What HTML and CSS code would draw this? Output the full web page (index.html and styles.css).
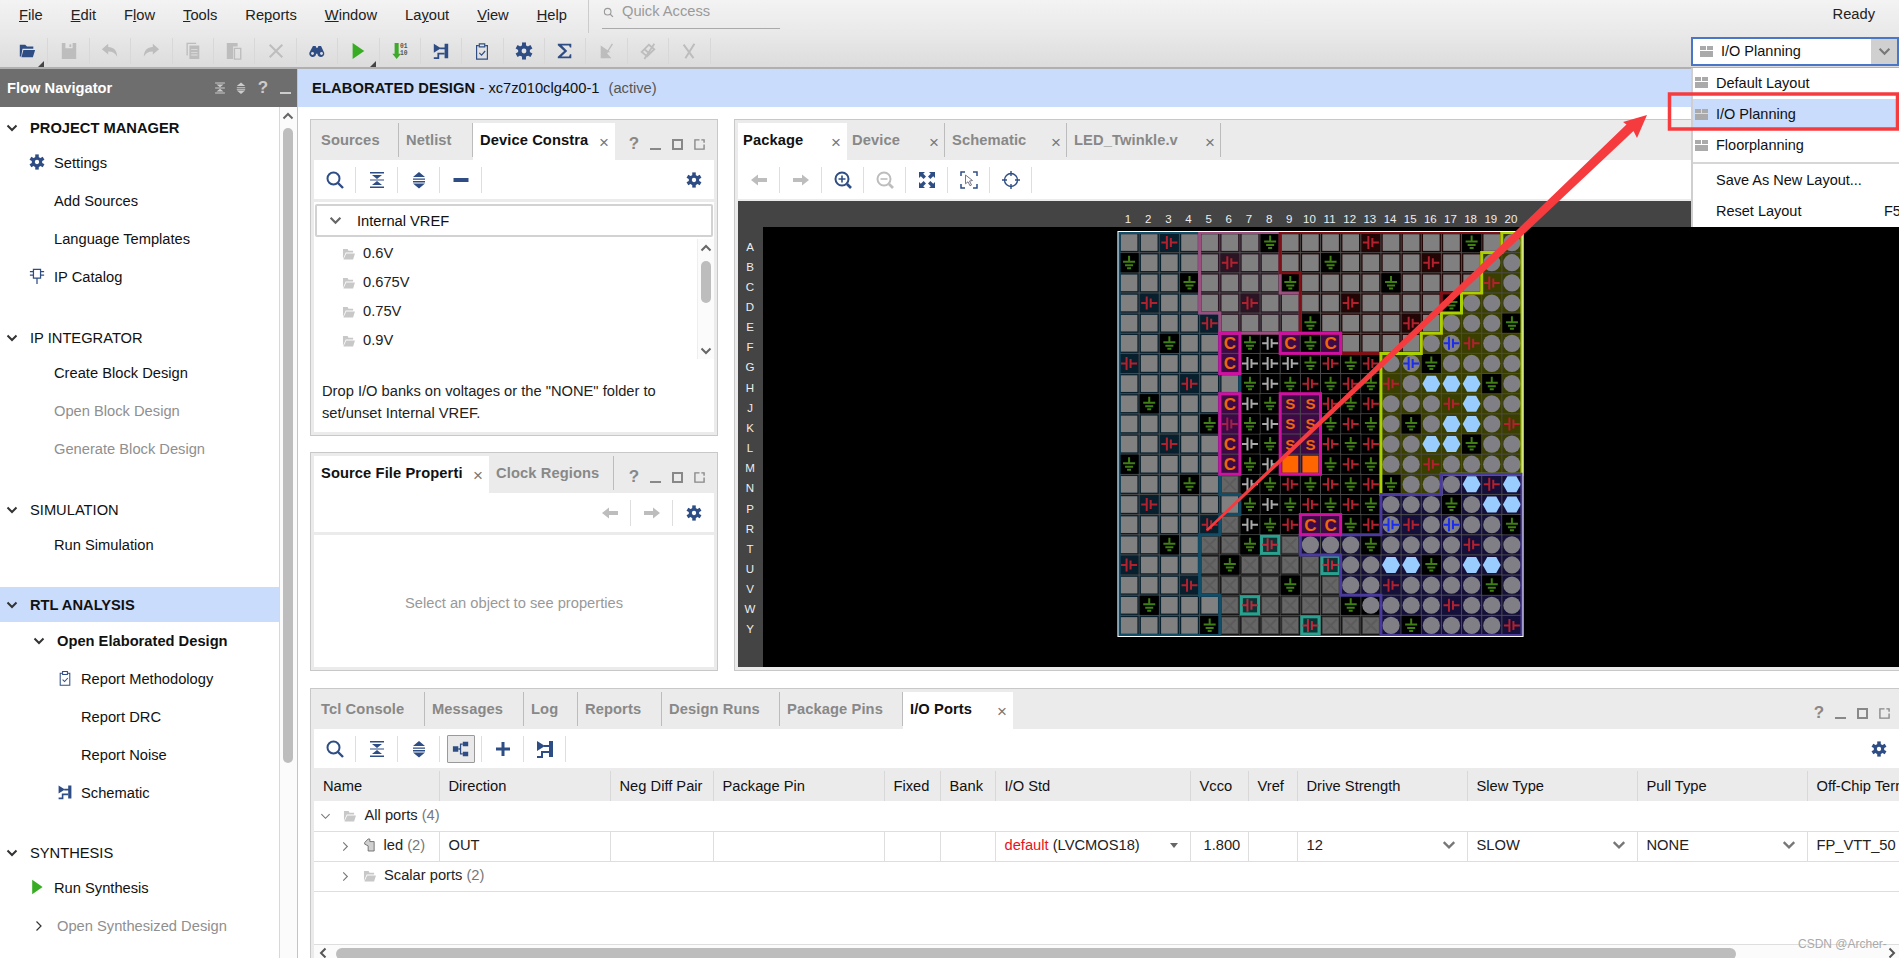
FILE: index.html
```html
<!DOCTYPE html>
<html lang="en">
<head>
<meta charset="utf-8">
<title>Vivado I/O Planning</title>
<link rel="stylesheet" href="styles.css">
</head>
<body>
<svg class="sprite" aria-hidden="true">
  <symbol id="gear" viewBox="-10 -10 20 20">
    <g fill="currentColor"><circle r="6.6"/><rect x="-2.2" y="-9.5" width="4.4" height="19"/><rect x="-2.2" y="-9.5" width="4.4" height="19" transform="rotate(60)"/><rect x="-2.2" y="-9.5" width="4.4" height="19" transform="rotate(120)"/></g>
    <circle r="2.7" fill="#fff"/>
  </symbol>
  <symbol id="gearg" viewBox="-10 -10 20 20">
    <g fill="currentColor"><circle r="6.6"/><rect x="-2.2" y="-9.5" width="4.4" height="19"/><rect x="-2.2" y="-9.5" width="4.4" height="19" transform="rotate(60)"/><rect x="-2.2" y="-9.5" width="4.4" height="19" transform="rotate(120)"/></g>
    <circle r="2.7" fill="#e3e3e3"/>
  </symbol>
  <symbol id="search" viewBox="0 0 20 20"><circle cx="8.5" cy="8.5" r="6" fill="none" stroke="currentColor" stroke-width="2"/><path d="M13 13l5 5" stroke="currentColor" stroke-width="2.4"/></symbol>
  <symbol id="collapse" viewBox="0 0 20 20"><path fill="currentColor" d="M3 2h14v1.6H3zM5 5h10l-5 4zM3 9.4h14v1.2H3zM10 11l5 4H5zM3 16.4h14V18H3z"/></symbol>
  <symbol id="expand" viewBox="0 0 20 20"><path fill="currentColor" d="M10 2l6 5H4zM4 8.4h12v1.4H4zM4 11h12v1.4H4zM4 13.5h12L10 18.500z"/></symbol>
  <symbol id="minus" viewBox="0 0 20 20"><rect x="2.500" y="8" width="15" height="4" fill="currentColor"/></symbol>
  <symbol id="plus" viewBox="0 0 20 20"><path fill="currentColor" d="M8.500 3h3v5.500H17v3h-5.500V17h-3v-5.500H3v-3h5.500z"/></symbol>
  <symbol id="left" viewBox="0 0 20 20"><path fill="currentColor" d="M2 10l7-5.500V8h9v4H9v3.500z"/></symbol>
  <symbol id="right" viewBox="0 0 20 20"><path fill="currentColor" d="M18 10l-7-5.500V8H2v4h9v3.500z"/></symbol>
  <symbol id="zoomin" viewBox="0 0 20 20"><circle cx="9" cy="9" r="6.500" fill="none" stroke="currentColor" stroke-width="2"/><path d="M14 14l4 4" stroke="currentColor" stroke-width="2.600"/><path d="M9 5.500v7M5.500 9h7" stroke="currentColor" stroke-width="1.600"/></symbol>
  <symbol id="zoomout" viewBox="0 0 20 20"><circle cx="9" cy="9" r="6.500" fill="none" stroke="currentColor" stroke-width="2"/><path d="M14 14l4 4" stroke="currentColor" stroke-width="2.600"/><path d="M5.500 9h7" stroke="currentColor" stroke-width="1.600"/></symbol>
  <symbol id="fit" viewBox="0 0 20 20"><path fill="currentColor" d="M2 2h6L6.200 3.800 9 6.600 6.600 9 3.800 6.200 2 8zM18 2v6l-1.800-1.800L13.400 9 11 6.600l2.800-2.800L12 2zM2 18v-6l1.800 1.800L6.600 11 9 13.400l-2.800 2.800L8 18zM18 18h-6l1.800-1.800L11 13.400l2.400-2.400 2.800 2.800L18 12z"/></symbol>
  <symbol id="zoomarea" viewBox="0 0 20 20"><path fill="none" stroke="currentColor" stroke-width="1.500" d="M2 6V2h4M14 2h4v4M18 14v4h-4M6 18H2v-4"/><path fill="#fff" stroke="#778" d="M6.500 5l7 5.500-3 .5 2 4-1.500.8-2-4-2.500 2z"/></symbol>
  <symbol id="target" viewBox="0 0 20 20"><circle cx="10" cy="10" r="6.500" fill="none" stroke="currentColor" stroke-width="1.400"/><path stroke="currentColor" stroke-width="1.400" d="M10 1v5M10 14v5M1 10h5M14 10h5"/></symbol>
  <symbol id="folderopen" viewBox="0 0 20 20"><path fill="currentColor" d="M2 3h6l2 2h7v2.500H5L3.500 16H2z"/><path fill="currentColor" d="M6 9h13l-2.500 8H3.800z"/></symbol>
  <symbol id="save" viewBox="0 0 20 20"><path fill="currentColor" fill-rule="evenodd" d="M2 1h16v18H2zM6 1v6h8V1zM10.500 2.500h2v3h-2z"/></symbol>
  <symbol id="undo" viewBox="0 0 20 20"><path fill="currentColor" d="M1 8l7-6v3.500c6 0 10 4 10 11-2-4-5-6-10-6V14z"/></symbol>
  <symbol id="redo" viewBox="0 0 20 20"><path fill="currentColor" d="M19 8l-7-6v3.500c-6 0-10 4-10 11 2-4 5-6 10-6V14z"/></symbol>
  <symbol id="copy" viewBox="0 0 20 20"><path fill="none" stroke="currentColor" stroke-width="1.500" d="M3.500 15V1.500h10"/><path fill="currentColor" fill-rule="evenodd" d="M6 4h11v15H6zM8 8v1h7V8zM8 11v1h7v-1zM8 14v1h7v-1z"/></symbol>
  <symbol id="paste" viewBox="0 0 20 20"><path fill="currentColor" d="M2 1h12v4H9v14H2z"/><path fill="none" stroke="currentColor" stroke-width="1.500" d="M10.500 7h7v12h-7z"/></symbol>
  <symbol id="cross" viewBox="0 0 20 20"><path fill="none" stroke="currentColor" stroke-width="2.200" d="M3 3l14 14M17 3L3 17"/></symbol>
  <symbol id="binoc" viewBox="0 0 20 20"><path fill="currentColor" d="M5.500 4.500h3l.7 2h1.600l.7-2h3l3.500 7.500a3.800 3.800 0 1 1-7.500 1h-1.500a3.800 3.800 0 1 1-7.500-1z"/><circle cx="5" cy="12.800" r="1.600" fill="#ddd"/><circle cx="15" cy="12.800" r="1.600" fill="#ddd"/></symbol>
  <symbol id="run" viewBox="0 0 20 20"><path fill="currentColor" d="M4 1l13 9-13 9z"/></symbol>
  <symbol id="schem" viewBox="0 0 20 20"><path fill="currentColor" d="M2 2l8 5-8 5zM14 2h4v16h-4z"/><path fill="none" stroke="currentColor" stroke-width="2" d="M9 7h6M14 13H7v5H2"/></symbol>
  <symbol id="clip" viewBox="0 0 20 20"><path fill="none" stroke="currentColor" stroke-width="1.300" d="M6.500 4H4v15h12V4h-2.500"/><path fill="none" stroke="currentColor" stroke-width="1.300" d="M7 2h6v3.500H7z"/><path fill="none" stroke="currentColor" stroke-width="1.300" d="M7 12l2.500 2.500L13.500 10"/></symbol>
  <symbol id="sigma" viewBox="0 0 20 20"><path fill="currentColor" d="M2 2h15v4h-1.500L14.500 4H6.500l6 6-6.500 6h8.500l1-2.500H17V18H2v-1.500L9 10 2 3.500z"/></symbol>
  <symbol id="dis1" viewBox="0 0 20 20"><path fill="currentColor" d="M3 4l11 7.500H9l6 6.500H3z"/><path stroke="currentColor" stroke-width="1.500" d="M16 2L6 18"/></symbol>
  <symbol id="dis2" viewBox="0 0 20 20"><path fill="none" stroke="currentColor" stroke-width="2" d="M3 11l8-8 6 5-8 8zM6 19L17 2M6 8l6 5"/></symbol>
  <symbol id="dis3" viewBox="0 0 20 20"><path fill="none" stroke="currentColor" stroke-width="2.200" d="M4 3l11 15M16 2L6 18"/></symbol>
  <symbol id="folder" viewBox="0 0 14 13"><path fill="currentColor" d="M1 1h5l1 2h5v2H4L1 12zM4.500 6H14l-2 6.500H1.500z"/></symbol>
  <symbol id="chip" viewBox="0 0 16 18"><path fill="none" stroke="currentColor" stroke-width="1.400" d="M4 1.500h8v10H4zM8 11.500V18M0 4h4M0 8h4M12 4h4M12 8h4"/></symbol>
  <symbol id="bus" viewBox="0 0 14 16"><path fill="#d0d0d0" stroke="#666" d="M2 5l4-4h2v3h5v11H6V9L2 7z"/></symbol>
  <symbol id="layout" viewBox="0 0 13 11"><path fill="currentColor" d="M0 0h6v4H0zM7 0h6v4H7zM0 5h13v6H0z"/></symbol>
  <symbol id="float" viewBox="0 0 12 12"><path fill="none" stroke="currentColor" stroke-width="1.500" d="M6 1H1v10h10V6M8 1h3v3"/></symbol>
  <symbol id="chev" viewBox="0 0 12 12"><path fill="none" stroke="currentColor" stroke-width="2" d="M1.500 3.500L6 8l4.500-4.500"/></symbol>
  <symbol id="chevthin" viewBox="0 0 12 12"><path fill="none" stroke="currentColor" stroke-width="1.200" d="M1.500 3.500L6 8l4.500-4.500"/></symbol>
  <symbol id="hier" viewBox="0 0 20 20"><path fill="currentColor" d="M1 7h6v6H1zM12 2h6v5h-6zM12 13h6v5h-6z"/><path fill="none" stroke="currentColor" stroke-width="1.400" d="M7 10h2.500V4.500H12M9.500 10v5.500H12"/></symbol>
</svg>

<header class="menubar">
  <nav class="menus">
    <span><u>F</u>ile</span><span><u>E</u>dit</span><span>F<u>l</u>ow</span><span><u>T</u>ools</span><span>Re<u>p</u>orts</span><span><u>W</u>indow</span><span>La<u>y</u>out</span><span><u>V</u>iew</span><span><u>H</u>elp</span>
  </nav>
  <div class="quick">
    <div class="quick-field"><svg class="ico-q"><use href="#search"/></svg><span>Quick Access</span></div>
  </div>
  <div class="ready">Ready</div>
</header>

<div class="toolbar-main">
  <button class="tb navy corner"><svg><use href="#folderopen"/></svg></button>
  <button class="tb off"><svg><use href="#save"/></svg></button>
  <button class="tb off"><svg><use href="#undo"/></svg></button>
  <button class="tb off"><svg><use href="#redo"/></svg></button>
  <button class="tb off"><svg><use href="#copy"/></svg></button>
  <button class="tb off"><svg><use href="#paste"/></svg></button>
  <button class="tb off"><svg><use href="#cross"/></svg></button>
  <button class="tb navy"><svg><use href="#binoc"/></svg></button>
  <button class="tb green corner"><svg><use href="#run"/></svg></button>
  <button class="tb navy">
    <svg viewBox="0 0 20 20"><path fill="#3daa2a" d="M4 1h4.500v12H11l-4.700 6L1.500 13H4z"/><text x="10" y="7" class="bits">01</text><text x="10" y="14" class="bits">10</text></svg>
  </button>
  <button class="tb navy"><svg><use href="#schem"/></svg></button>
  <button class="tb navy"><svg><use href="#clip"/></svg></button>
  <button class="tb navy"><svg><use href="#gearg"/></svg></button>
  <button class="tb navy"><svg><use href="#sigma"/></svg></button>
  <button class="tb off"><svg><use href="#dis1"/></svg></button>
  <button class="tb off"><svg><use href="#dis2"/></svg></button>
  <button class="tb off"><svg><use href="#dis3"/></svg></button>
  <div class="combo">
    <svg class="ico-layout"><use href="#layout"/></svg>
    <span class="combo-text">I/O Planning</span>
    <span class="combo-btn"><svg><use href="#chev"/></svg></span>
  </div>
</div>

<div class="app">
  <aside class="flownav">
    <div class="flownav-head">
      <span class="flownav-title">Flow Navigator</span>
      <span class="flownav-ctrl">
        <svg><use href="#collapse"/></svg><svg><use href="#expand"/></svg><b>?</b><i></i>
      </span>
    </div>
    <div class="flownav-body">
      <div class="flownav-list">
        <section class="navsec first">
          <div class="navhead bold"><svg class="chev"><use href="#chev"/></svg>PROJECT MANAGER</div>
          <div class="navitem"><svg class="navico navy"><use href="#gear"/></svg>Settings</div>
          <div class="navitem">Add Sources</div>
          <div class="navitem">Language Templates</div>
          <div class="navitem"><svg class="navico navy"><use href="#chip"/></svg>IP Catalog</div>
        </section>
        <section class="navsec">
          <div class="navhead"><svg class="chev"><use href="#chev"/></svg>IP INTEGRATOR</div>
          <div class="navitem">Create Block Design</div>
          <div class="navitem dim">Open Block Design</div>
          <div class="navitem dim">Generate Block Design</div>
        </section>
        <section class="navsec">
          <div class="navhead"><svg class="chev"><use href="#chev"/></svg>SIMULATION</div>
          <div class="navitem">Run Simulation</div>
        </section>
        <section class="navsec rtl">
          <div class="navhead bold selected"><svg class="chev"><use href="#chev"/></svg>RTL ANALYSIS</div>
          <div class="navitem sub bold"><svg class="chev subchev"><use href="#chev"/></svg>Open Elaborated Design</div>
          <div class="navitem subsub"><svg class="navico subico navy"><use href="#clip"/></svg>Report Methodology</div>
          <div class="navitem subsub">Report DRC</div>
          <div class="navitem subsub">Report Noise</div>
          <div class="navitem subsub"><svg class="navico subico navy"><use href="#schem"/></svg>Schematic</div>
        </section>
        <section class="navsec syn">
          <div class="navhead"><svg class="chev"><use href="#chev"/></svg>SYNTHESIS</div>
          <div class="navitem"><svg class="navico green"><use href="#run"/></svg>Run Synthesis</div>
          <div class="navitem sub dim"><svg class="chev subchev chev-r"><use href="#chevthin"/></svg>Open Synthesized Design</div>
        </section>
      </div>
      <div class="vscroll nav-scroll">
        <svg class="arrow up"><use href="#chev"/></svg>
        <div class="thumb nav-thumb"></div>
      </div>
    </div>
  </aside>

  <main class="workspace">
    <div class="banner"><b>ELABORATED DESIGN</b> - xc7z010clg400-1 <span class="active">(active)</span></div>

    <div class="upper">
      <div class="leftcol">
        <section class="panel sources">
          <div class="tabs">
            <span class="tab t85">Sources</span>
            <span class="tab t74">Netlist</span>
            <span class="tab on t142">Device Constra<em class="x">×</em></span>
            <span class="ctrls"><b>?</b><i class="c-min"></i><i class="c-max"></i><svg><use href="#float"/></svg></span>
          </div>
          <div class="ptools">
            <button class="tb navy"><svg><use href="#search"/></svg></button>
            <button class="tb navy"><svg><use href="#collapse"/></svg></button>
            <button class="tb navy"><svg><use href="#expand"/></svg></button>
            <button class="tb navy"><svg><use href="#minus"/></svg></button>
            <svg class="ptool-gear navy"><use href="#gear"/></svg>
          </div>
          <div class="pbody">
            <div class="vrefhead"><svg class="chev"><use href="#chev"/></svg>Internal VREF</div>
            <div class="treewrap">
              <ul class="tree">
                <li><svg><use href="#folder"/></svg>0.6V</li>
                <li><svg><use href="#folder"/></svg>0.675V</li>
                <li><svg><use href="#folder"/></svg>0.75V</li>
                <li><svg><use href="#folder"/></svg>0.9V</li>
              </ul>
              <div class="vscroll tree-scroll">
                <svg class="arrow up"><use href="#chev"/></svg>
                <div class="thumb tree-thumb"></div>
                <svg class="arrow down"><use href="#chev"/></svg>
              </div>
            </div>
            <p class="hint">Drop I/O banks on voltages or the "NONE" folder to<br>set/unset Internal VREF.</p>
          </div>
        </section>

        <section class="panel props">
          <div class="tabs">
            <span class="tab on t175">Source File Properti<em class="x">×</em></span>
            <span class="tab t125">Clock Regions</span>
            <span class="ctrls"><b>?</b><i class="c-min"></i><i class="c-max"></i><svg><use href="#float"/></svg></span>
          </div>
          <div class="ptools end">
            <button class="tb off"><svg><use href="#left"/></svg></button>
            <button class="tb off"><svg><use href="#right"/></svg></button>
            <svg class="ptool-gear navy"><use href="#gear"/></svg>
          </div>
          <div class="pbody placeholder">Select an object to see properties</div>
        </section>
      </div>

      <section class="panel package">
        <div class="tabs">
          <span class="tab on t109">Package<em class="x">×</em></span>
          <span class="tab t98">Device<em class="x">×</em></span>
          <span class="tab t122">Schematic<em class="x">×</em></span>
          <span class="tab t154">LED_Twinkle.v<em class="x">×</em></span>
        </div>
        <div class="ptools">
          <button class="tb off"><svg><use href="#left"/></svg></button>
          <button class="tb off"><svg><use href="#right"/></svg></button>
          <button class="tb navy"><svg><use href="#zoomin"/></svg></button>
          <button class="tb off"><svg><use href="#zoomout"/></svg></button>
          <button class="tb navy"><svg><use href="#fit"/></svg></button>
          <button class="tb navy"><svg><use href="#zoomarea"/></svg></button>
          <button class="tb navy"><svg><use href="#target"/></svg></button>
        </div>
        <div class="canvas" id="pkg"></div>
      </section>
    </div>

    <section class="panel lower">
      <div class="tabs">
        <span class="tab t111">Tcl Console</span>
        <span class="tab t99">Messages</span>
        <span class="tab t54">Log</span>
        <span class="tab t84">Reports</span>
        <span class="tab t118">Design Runs</span>
        <span class="tab t123">Package Pins</span>
        <span class="tab on t110">I/O Ports<em class="x">×</em></span>
        <span class="ctrls"><b>?</b><i class="c-min"></i><i class="c-max"></i><svg><use href="#float"/></svg></span>
      </div>
      <div class="ptools">
        <button class="tb navy"><svg><use href="#search"/></svg></button>
        <button class="tb navy"><svg><use href="#collapse"/></svg></button>
        <button class="tb navy"><svg><use href="#expand"/></svg></button>
        <button class="tb navy pressed"><svg><use href="#hier"/></svg></button>
        <button class="tb navy"><svg><use href="#plus"/></svg></button>
        <button class="tb navy"><svg><use href="#schem"/></svg></button>
        <svg class="ptool-gear navy"><use href="#gear"/></svg>
      </div>
      <div class="pbody tablewrap">
        <table class="ports">
          <colgroup>
            <col class="c1"><col class="c2"><col class="c3"><col class="c4"><col class="c5"><col class="c6"><col class="c7"><col class="c8"><col class="c9"><col class="c10"><col class="c11"><col class="c12"><col class="c13">
          </colgroup>
          <thead>
            <tr><th>Name</th><th>Direction</th><th>Neg Diff Pair</th><th>Package Pin</th><th>Fixed</th><th>Bank</th><th>I/O Std</th><th>Vcco</th><th>Vref</th><th>Drive Strength</th><th>Slew Type</th><th>Pull Type</th><th>Off-Chip Termination</th></tr>
          </thead>
          <tbody>
            <tr class="plain"><td colspan="13"><svg class="tw lvl0"><use href="#chevthin"/></svg><svg class="fold"><use href="#folder"/></svg>All ports <span class="count">(4)</span></td></tr>
            <tr class="up1">
              <td><svg class="tw lvl1 chev-r"><use href="#chevthin"/></svg><svg class="bus"><use href="#bus"/></svg>led <span class="count">(2)</span></td>
              <td>OUT</td><td></td><td></td><td></td><td></td>
              <td><span class="sel"><span><span class="red">default</span> (LVCMOS18)</span><i class="tri"></i></span></td>
              <td class="num">1.800</td><td></td>
              <td><span class="sel">12<svg><use href="#chev"/></svg></span></td>
              <td><span class="sel">SLOW<svg><use href="#chev"/></svg></span></td>
              <td><span class="sel">NONE<svg><use href="#chev"/></svg></span></td>
              <td>FP_VTT_50</td>
            </tr>
            <tr class="plain up1"><td colspan="13"><svg class="tw lvl1 chev-r"><use href="#chevthin"/></svg><svg class="fold"><use href="#folder"/></svg>Scalar ports <span class="count">(2)</span></td></tr>
          </tbody>
        </table>
        <div class="hscroll">
          <svg class="harrow hleft"><use href="#chev"/></svg>
          <div class="hthumb"></div>
          <svg class="harrow hright"><use href="#chev"/></svg>
        </div>
      </div>
    </section>
  </main>
</div>

<div class="layoutmenu">
  <div class="lm-item first"><svg><use href="#layout"/></svg>Default Layout</div>
  <div class="lm-item hi"><svg><use href="#layout"/></svg>I/O Planning</div>
  <div class="lm-item third"><svg><use href="#layout"/></svg>Floorplanning</div>
  <hr class="lm-sep">
  <div class="lm-item plain">Save As New Layout...</div>
  <div class="lm-item plain">Reset Layout<span class="key">F5</span></div>
</div>

<svg class="annot" viewBox="0 0 1899 958" aria-hidden="true">
  <rect x="1669.500" y="94" width="228" height="35" fill="none" stroke="#f63b3f" stroke-width="3.500"/>
  <polygon fill="#f63b3f" points="1206,529.500 1626.500,124.500 1623,122 1647,115 1637,138 1633.500,131 1208,531"/>
</svg>

<div class="watermark">CSDN @Archer-</div>
<script src="script.js"></script>
</body>
</html>
```
FILE: styles.css
```css
* { box-sizing: border-box; }
html, body { margin: 0; height: 958px; overflow: hidden; }
body {
  width: 1899px;
  position: relative;
  font-family: "Liberation Sans", Arial, sans-serif;
  font-size: 14.7px;
  color: #111;
  background: #fff;
}
.sprite { width: 0; height: 0; position: absolute; }
svg { display: block; }
button { border: 0; padding: 0; background: none; font: inherit; }
.navy { color: #2f4d85; }
.green { color: #38ad24; }
.off { color: #bdbdbd; }
.bits { font-family: "Liberation Mono", monospace; font-size: 7px; font-weight: 700; fill: #555; }

/* menu bar */
.menubar {
  height: 33px;
  display: flex;
  background: linear-gradient(#f3f3f3, #e9e9e9);
}
.menus { display: flex; gap: 28px; padding: 7px 0 0 19px; width: 588px; height: 33px; line-height: 17px; color: #222; }
.menus u { text-underline-offset: 1px; }
.quick {
  border-left: 1px solid #ccc;
  width: 193px;
  height: 33px;
  padding-left: 13px;
}
.quick-field { width: 178px; height: 29px; border-bottom: 1px solid #aaa; display: flex; color: #9a9a9a; padding: 3px 0 0 1px; line-height: 17px; }
.ico-q { width: 11px; height: 11px; margin: 4px 8px 0 0; flex: none; }
.ready { margin-left: auto; padding: 6px 24px 0 0; line-height: 17px; color: #222; }

/* main tool bar */
.toolbar-main {
  height: 36px;
  display: flex;
  align-items: center;
  padding: 2px 0 0 7px;
  background: linear-gradient(#e9e9e9, #dcdcdc);
  border-bottom: 2px solid #b0b0b0;
}
.tb {
  width: 42px;
  height: 26px;
  flex: none;
  display: flex;
  align-items: center;
  justify-content: center;
  border-right: 1px solid #dedede;
  position: relative;
}
.tb svg { width: 20px; height: 20px; }
.toolbar-main .tb { width: 41.4px; border-right-color: #d8d8d8; }
.toolbar-main .tb svg { width: 18px; height: 18px; }
.corner::after {
  content: "";
  position: absolute;
  right: 3px;
  bottom: -3px;
  border: 3px solid transparent;
  border-right-color: #444;
  border-bottom-color: #444;
}
.combo {
  margin-left: auto;
  width: 208px;
  height: 29px;
  border: 2px solid #4a76c8;
  background: #fff;
  display: flex;
  align-items: center;
  padding-left: 7px;
}
.ico-layout { width: 13px; height: 11px; color: #aaa; margin-right: 8px; }
.combo-text { flex: 1; font-size: 14.5px; }
.combo-btn { width: 26px; height: 25px; background: #d0d0d0; display: flex; align-items: center; justify-content: center; color: #777; }
.combo-btn svg { width: 13px; height: 13px; }

/* app */
.app { display: flex; height: 889px; }
.flownav { width: 298px; flex: none; display: flex; flex-direction: column; border-right: 1px solid #c4c4c4; }
.flownav-head {
  height: 38px;
  background: #6e6e6e;
  color: #fff;
  display: flex;
  align-items: center;
  padding-left: 7px;
}
.flownav-title { font-weight: 700; }
.flownav-ctrl { margin-left: auto; display: flex; align-items: center; color: #ccc; padding-right: 6px; }
.flownav-ctrl svg { width: 14px; height: 14px; margin-right: 7px; }
.flownav-ctrl svg + svg { margin-right: 4px; }
.flownav-ctrl b { font-size: 17px; width: 22px; text-align: center; }
.flownav-ctrl i { display: block; width: 11px; height: 2px; background: #ccc; margin: 10px 0 0 6px; }
.flownav-body { flex: 1; display: flex; min-height: 0; overflow: hidden; }
.flownav-list { width: 280px; flex: none; border-right: 1px solid #d8d8d8; padding-top: 5px; }
.navsec { margin-top: 26px; }
.navsec.first { margin-top: 0; }
.navsec.rtl { margin-top: 23px; }
.navsec.syn { margin-top: 25px; }
.navhead { height: 32px; display: flex; align-items: center; padding-left: 30px; position: relative; }
.navhead .chev { position: absolute; left: 6px; top: 10px; width: 12px; height: 12px; color: #333; }
.navhead.selected { height: 35px; background: #c9dcfb; }
.navhead.selected .chev { top: 12px; }
.bold { font-weight: 700; }
.navitem { height: 38px; display: flex; align-items: center; padding-left: 54px; position: relative; }
.navico { position: absolute; left: 29px; top: 10px; width: 16px; height: 16px; }
.navitem.sub { padding-left: 57px; }
.navitem.subsub { padding-left: 81px; }
.subico { left: 57px; }
.subchev { position: absolute; left: 33px; top: 13px; width: 12px; height: 12px; color: #333; }
.chev-r { transform: rotate(-90deg); }
.dim { color: #8f8f8f; }
.vscroll { position: relative; background: #fbfbfb; }
.nav-scroll { width: 17px; flex: none; }
.arrow { width: 14px; height: 12px; color: #666; position: absolute; left: 1px; }
.arrow.up { top: 3px; transform: rotate(180deg); }
.arrow.down { bottom: 2px; }
.thumb { background: #bdbdbd; border-radius: 5px; width: 10px; position: absolute; left: 3px; }
.nav-thumb { top: 21px; height: 635px; }

/* workspace */
.workspace { flex: 1; min-width: 0; display: flex; flex-direction: column; background: #fff; }
.banner { height: 38px; flex: none; background: #c9dcfb; display: flex; align-items: center; padding-left: 14px; white-space: pre; }
.banner b { letter-spacing: .12px; }
.banner .active { color: #555; margin-left: 5px; }
.upper { display: flex; flex: none; height: 564px; padding: 12px 0 0 12px; gap: 16px; }
.leftcol { width: 408px; flex: none; display: flex; flex-direction: column; gap: 16px; }
.panel { border: 1px solid #c8c8c8; padding: 3px; background: #ebebeb; display: flex; flex-direction: column; min-width: 0; }
.sources { height: 317px; flex: none; }
.props { height: 219px; flex: none; }
.package { flex: 1; height: 552px; border-right: 0; padding-right: 0; }
.lower { margin: 17px 0 0 12px; height: 270px; flex: none; border-right: 0; border-bottom: 0; padding-right: 0; padding-bottom: 0; }

.tabs { height: 37px; display: flex; flex: none; color: #888; font-weight: 700; }
.tab { display: flex; align-items: center; height: 100%; flex: none; padding: 0 6px 4px 7px; position: relative; white-space: nowrap; letter-spacing: .1px; }
.tab::after { content: ""; position: absolute; right: 0; top: 0; bottom: 3px; width: 1px; background: #bcbcbc; }
.tab.on { background: #fff; color: #111; }
.tab.on::after { display: none; }
.package .tab:nth-child(-n+2) { padding-left: 5px; }
.t54 { width: 54px; } .t74 { width: 74px; } .t84 { width: 84px; } .t85 { width: 85px; }
.t98 { width: 98px; } .t99 { width: 99px; } .t109 { width: 109px; } .t110 { width: 110px; }
.t111 { width: 111px; } .t118 { width: 118px; } .t122 { width: 122px; } .t123 { width: 123px; }
.t125 { width: 125px; } .t142 { width: 142px; } .t154 { width: 154px; } .t175 { width: 175px; }
.x { font-style: normal; font-weight: 400; font-size: 17px; color: #777; line-height: 1; margin: 5px 0 0 auto; }
.ctrls { margin-left: auto; display: flex; align-items: center; padding: 5px 4px 0 0; color: #888; font-weight: 400; }
.ctrls > * { flex: none; }
.ctrls b { width: 22px; text-align: center; font-size: 17px; font-weight: 700; }
.ctrls i { display: block; }
.c-min { width: 11px; height: 2px; background: #888; margin: 10px 6px 0 5px; }
.c-max { width: 11px; height: 11px; border: 2px solid #888; margin: 0 6px 0 5px; }
.ctrls svg { width: 11px; height: 11px; margin: 0 5px; }

.ptools { height: 39px; flex: none; background: #fff; display: flex; align-items: center; margin-bottom: 3px; padding-right: 12px; }
.package .ptools { margin-bottom: 2px; }
.ptool-gear { width: 16px; height: 16px; margin-left: auto; }
.ptools.end { padding-left: 275px; }
.pressed svg { box-sizing: content-box; padding: 4px; border: 1px solid #9a9a9a; background: #e9e9e9; width: 18px; height: 18px; border-radius: 1px; }
.pbody { flex: 1; background: #fff; min-height: 0; display: flex; flex-direction: column; }

.vrefhead { height: 33px; flex: none; margin: 2px 1px 0; border: 2px solid #d2d2d2; border-radius: 2px; display: flex; align-items: center; padding-left: 12px; }
.vrefhead .chev { width: 13px; height: 13px; color: #666; margin-right: 15px; }
.treewrap { display: flex; height: 120px; flex: none; margin-top: 2px; }
.tree { flex: 1; list-style: none; margin: 0; padding: 0; }
.tree li { height: 29px; display: flex; align-items: center; padding: 0 0 2px 28px; color: #222; }
.tree svg { width: 13px; height: 12px; color: #c8c8c8; margin: 2px 8px 0 0; }
.tree-scroll { width: 17px; border-left: 1px solid #eee; }
.tree-thumb { top: 22px; height: 42px; left: 3px; }
.hint { margin: 21px 0 0 8px; line-height: 22px; color: #222; }
.placeholder { align-items: center; justify-content: center; color: #999; padding-top: 3px; }

.canvas { flex: 1; background: #444; min-height: 0; overflow: hidden; }
.canvas svg { width: 1161px; height: 466px; }
.canvas text { font-family: "Liberation Sans", Arial, sans-serif; }

/* table */
.tablewrap { position: relative; overflow: hidden; }
.ports { border-collapse: collapse; table-layout: fixed; width: 1663px; }
.c1 { width: 125px; } .c2 { width: 171px; } .c3 { width: 103px; } .c4 { width: 171px; }
.c5 { width: 56px; } .c6 { width: 55px; } .c7 { width: 195px; } .c8 { width: 58px; }
.c9 { width: 49px; } .c10, .c11, .c12, .c13 { width: 170px; }
.ports th { height: 30px; background: #ebebeb; font-weight: 400; text-align: left; padding: 0 0 1px 9px; border-right: 1px solid #d8d8d8; white-space: nowrap; overflow: hidden; }
.ports td { height: 30px; padding: 0 0 1px 9px; border-right: 1px solid #dedede; border-bottom: 1px solid #dedede; white-space: nowrap; overflow: hidden; color: #222; }
.ports .up1 td { padding-bottom: 2px; }
.ports td svg { display: inline-block; vertical-align: -2px; }
.plain td { border-right: 0; }
.tw { width: 11px; height: 11px; color: #777; }
.lvl0 { margin: 0 12px 0 -3px; }
.lvl1 { margin: 0 11.5px 0 17px; }
.fold { width: 13px; height: 12px; color: #c8c8c8; margin-right: 8.5px; }
.bus { width: 12px; height: 14px; margin-right: 9px; }
.count { color: #777; }
.sel { display: flex; justify-content: space-between; align-items: center; padding-right: 11px; }
.sel svg { width: 14px; height: 14px; color: #777; }
.tri { border: 4px solid transparent; border-top: 5px solid #666; border-bottom: 0; display: block; margin-right: 1px; }
.red { color: #e8131b; }
.num { padding-left: 13px !important; }
.hscroll { position: absolute; left: 0; right: 0; bottom: 0; height: 14px; border-top: 1px solid #dedede; background: #fbfbfb; }
.hthumb { position: absolute; left: 22px; width: 1400px; top: 3px; height: 12px; background: #bdbdbd; border-radius: 6px; }
.harrow { position: absolute; top: 2px; width: 12px; height: 12px; color: #555; }
.hleft { left: 3px; transform: rotate(90deg); }
.hright { right: 1px; transform: rotate(-90deg); }

/* layout popup */
.layoutmenu {
  position: absolute;
  left: 1691px;
  top: 68px;
  width: 208px;
  height: 159px;
  background: #fff;
  border-left: 2px solid #cfcfcf;
  overflow: hidden;
  font-size: 14.5px;
}
.lm-item { height: 31px; display: flex; align-items: center; padding-left: 2px; }
.lm-item svg { width: 13px; height: 11px; color: #aaa; margin-right: 8px; flex: none; }
.lm-item.first { padding-bottom: 2px; }
.lm-item.hi { background: #c9dcfb; height: 30px; }
.lm-item.third { height: 32px; }
.lm-item.plain { padding: 0 0 2px 23px; }
.key { margin-left: auto; width: 15px; overflow: hidden; }
.lm-sep { border: 0; height: 2px; background: #d6d6d6; margin: 1px 0; }

.annot { position: absolute; inset: 0; width: 1899px; height: 958px; pointer-events: none; }
.watermark { position: absolute; left: 1798px; top: 937px; font-size: 12px; color: #a9a9a9; }
```
FILE: script.js
```js
(function () {
  var NS = 'http://www.w3.org/2000/svg';
  var P = 20.15, GX = 381, GY = 31.5; // pitch and grid origin inside the canvas

  // One letter per ball, rows A..Y, columns 1..20
  var ROWS = [
    'ssPssssGssssPssssGso',
    'GssssPssssGssssPssoo',
    'sssGssssGssssGssssPo',
    'sPssssPssssPssssGooo',
    'ssssPssssGssssPsoooG',
    'ssGssCGWCGCssssoBPoo',
    'PssssCWWWGPGPoBGoooo',
    'sssPssGWGPGPGPoHHHGo',
    'sGsssCWGMMPGPoooPHoo',
    'ssssGRGWMMGPGoGoHHoP',
    'ssPssCWGMMPGPooHHGoo',
    'GssssCGWOOGPGooPoooo',
    'sssGsXWGPGPGPGoooHPH',
    'sPssssGWGPGPGoooGoHH',
    'ssssPXWGPCCGPBPoBooG',
    'ssGsXXGTXoooGooooPoo',
    'PsssXGXXXXTooHHGoHHo',
    'sssPXXXXGXXooPooooGo',
    'sGsssXTXXXXGooooPooo',
    'ssssGXXXXTXXXoGooooP'
  ];
  var LABELS = 'ABCDEFGHJKLMNPRTUVWY';

  var REGIONS = [
    { fill: '#08202e', line: '#124d68', pts: '0,0 4,0 4,4 5,4 5,7 6,7 6,8 5,8 5,13 6,13 6,14 5,14 5,15 4,15 4,18 5,18 5,20 0,20' },
    { fill: '#2b1524', line: '#9a4f7e', pts: '4,0 8,0 8,3 9,3 9,5 5,5 5,4 4,4' },
    { fill: '#220606', line: '#7e0f14', pts: '8,0 19,0 19,1 18,1 18,3 16,3 16,5 15,5 15,6 11,6 11,5 9,5 9,2 8,2' },
    { fill: '#3a3f00', line: '#a9d000', pts: '19,0 20,0 20,12 16,12 16,13 13,13 13,6 15,6 15,5 16,5 16,4 17,4 17,3 18,3 18,1 19,1' },
    { fill: '#15103a', line: '#4a3a9c', pts: '16,12 20,12 20,20 13,20 13,18 11,18 11,16 9,16 9,15 13,15 13,13 16,13' }
  ];
  var BOXES = [[5, 5, 6, 7], [8, 5, 11, 6], [5, 8, 6, 12], [8, 8, 10, 12], [9, 14, 11, 15]];

  function el(name, attrs, parent, text) {
    var n = document.createElementNS(NS, name);
    for (var k in attrs) n.setAttribute(k, attrs[k]);
    if (text) n.textContent = text;
    if (parent) parent.appendChild(n);
    return n;
  }
  function scaled(pts) {
    return pts.split(' ').map(function (p) {
      var c = p.split(',');
      return (c[0] * P).toFixed(1) + ',' + (c[1] * P).toFixed(1);
    }).join(' ');
  }

  var svg = el('svg', { viewBox: '0 0 1161 466', role: 'img' });
  el('rect', { x: 25, y: 26, width: 1136, height: 440, fill: '#000' }, svg);

  for (var c = 0; c < 20; c++) {
    el('text', { x: GX + (c + .5) * P - 1, y: 22, fill: '#eee', 'font-size': 11.5, 'text-anchor': 'middle' }, svg, String(c + 1));
    el('text', { x: 12, y: GY + (c + .5) * P + 8, fill: '#eee', 'font-size': 11.5, 'text-anchor': 'middle' }, svg, LABELS[c]);
  }

  var g = el('g', { transform: 'translate(' + GX + ' ' + GY + ')' }, svg);

  REGIONS.forEach(function (r) { el('polygon', { points: scaled(r.pts), fill: r.fill }, g); });
  BOXES.forEach(function (b) {
    el('rect', { x: b[0] * P, y: b[1] * P, width: (b[2] - b[0]) * P, height: (b[3] - b[1]) * P, fill: '#3e0a46' }, g);
  });

  var GROUND = 'M0-7V-1M-6-1H6M-4 2.500H4M-2 5.500H2';
  var PIN = 'M-8 0H-2.500M-2.500-6.500V6.500M1.500-4.500V4.500M1.500 0H8';

  for (var i = 0; i <= 20; i++) {
    el('path', { d: 'M' + i * P + ' 0V' + 20 * P, stroke: '#4b4b4b', 'stroke-width': 1 }, g);
    el('path', { d: 'M0 ' + i * P + 'H' + 20 * P, stroke: '#4b4b4b', 'stroke-width': 1 }, g);
  }

  function drawSymbol(cell, d, color) {
    el('path', { d: d, fill: 'none', stroke: color, 'stroke-width': 2 }, cell);
  }

  ROWS.forEach(function (row, r) {
    row.split('').forEach(function (t, c) {
      var cell = el('g', { transform: 'translate(' + ((c + .5) * P).toFixed(2) + ' ' + ((r + .5) * P).toFixed(2) + ')' }, g);
      var cols = { fill: '#f0650a', 'font-weight': 700, 'text-anchor': 'middle' };
      switch (t) {
        case 's': el('rect', { x: -8.3, y: -8.3, width: 16.6, height: 16.6, fill: '#808080' }, cell); break;
        case 'o': el('circle', { r: 8.6, fill: '#7f7f85' }, cell); break;
        case 'H': el('polygon', { points: '-9,0 -4.5,-8 4.5,-8 9,0 4.5,8 -4.5,8', fill: '#99ccff' }, cell); break;
        case 'X':
          el('rect', { x: -8.5, y: -8.5, width: 17, height: 17, fill: '#666', stroke: '#383838' }, cell);
          el('path', { d: 'M-6-6L6 6M6-6L-6 6', stroke: '#5c5c5c', 'stroke-width': 2 }, cell);
          break;
        case 'G':
          el('rect', { x: -9.6, y: -9.6, width: 19.2, height: 19.2, fill: '#000' }, cell);
          drawSymbol(cell, GROUND, '#3f7f14');
          break;
        case 'P': drawSymbol(cell, PIN, '#b3202e'); break;
        case 'W': drawSymbol(cell, PIN, '#aaa'); break;
        case 'R': drawSymbol(cell, PIN, '#a3204a'); break;
        case 'B':
          el('circle', { r: 8.6, fill: '#7f7f85' }, cell);
          drawSymbol(cell, PIN, '#1a2cf0');
          break;
        case 'T':
          el('rect', { x: -8.6, y: -8.6, width: 17.2, height: 17.2, fill: '#0b3434', stroke: '#2aa08e', 'stroke-width': 3 }, cell);
          drawSymbol(cell, PIN, '#c0283a');
          break;
        case 'C': cols['font-size'] = 17; cols.y = 6; el('text', cols, cell, 'C'); break;
        case 'M': cols['font-size'] = 15; cols.y = 5.5; el('text', cols, cell, 'S'); break;
        case 'O': el('rect', { x: -8, y: -8.5, width: 16, height: 17, fill: '#ff6600' }, cell); break;
      }
    });
  });

  REGIONS.forEach(function (r) {
    el('polygon', { points: scaled(r.pts), fill: 'none', stroke: r.line, 'stroke-width': 3 }, g);
  });
  BOXES.forEach(function (b) {
    el('rect', { x: b[0] * P, y: b[1] * P, width: (b[2] - b[0]) * P, height: (b[3] - b[1]) * P, fill: 'none', stroke: '#d010a0', 'stroke-width': 3 }, g);
  });
  el('rect', { x: -1, y: -1, width: 20 * P + 2, height: 20 * P + 2, fill: 'none', stroke: '#fff', 'stroke-width': 1 }, g);

  document.getElementById('pkg').appendChild(svg);
})();
```
